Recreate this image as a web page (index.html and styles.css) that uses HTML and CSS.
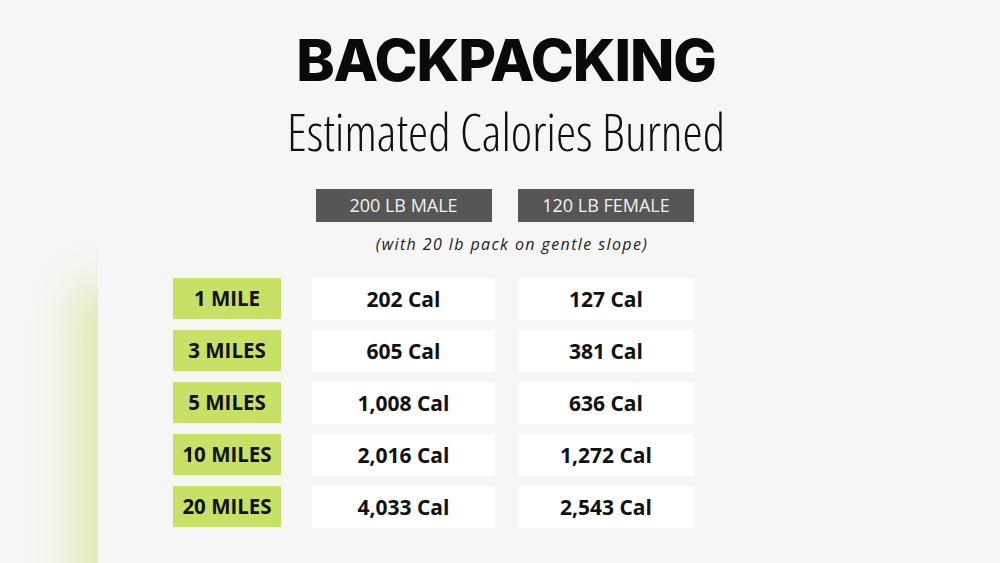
FILE: index.html
```html
<!DOCTYPE html>
<html lang="en">
<head>
<meta charset="utf-8">
<title>Backpacking - Estimated Calories Burned</title>
<link rel="stylesheet" href="styles.css">
</head>
<body>
<div class="glow-clip"><div class="glow"></div></div>
<main class="page">
  <header class="head">
    <h1 class="title">BACKPACKING</h1>
    <p class="subtitle">Estimated Calories Burned</p>
  </header>
  <div class="table">
    <div class="row hrow">
      <div class="label-space"></div>
      <div class="col1 hcell"><span class="hbox">200 LB MALE</span></div>
      <div class="col2 hcell"><span class="hbox">120 LB FEMALE</span></div>
    </div>
    <p class="note">(with 20 lb pack on gentle slope)</p>
    <div class="row">
      <div class="label">1 MILE</div>
      <div class="cell col1">202 Cal</div>
      <div class="cell col2">127 Cal</div>
    </div>
    <div class="row">
      <div class="label">3 MILES</div>
      <div class="cell col1">605 Cal</div>
      <div class="cell col2">381 Cal</div>
    </div>
    <div class="row">
      <div class="label">5 MILES</div>
      <div class="cell col1">1,008 Cal</div>
      <div class="cell col2">636 Cal</div>
    </div>
    <div class="row">
      <div class="label">10 MILES</div>
      <div class="cell col1">2,016 Cal</div>
      <div class="cell col2">1,272 Cal</div>
    </div>
    <div class="row">
      <div class="label">20 MILES</div>
      <div class="cell col1">4,033 Cal</div>
      <div class="cell col2">2,543 Cal</div>
    </div>
  </div>
</main>
</body>
</html>
```

FILE: styles.css
```css
html, body {
  margin: 0;
  padding: 0;
}
body {
  width: 1000px;
  height: 563px;
  background: #f6f6f6;
  overflow: hidden;
  position: relative;
  font-family: "Open Sans", "Liberation Sans", sans-serif;
  color: #111;
}
.glow-clip {
  position: absolute;
  left: 0;
  top: 0;
  width: 98px;
  height: 563px;
  overflow: hidden;
}
.glow {
  position: absolute;
  left: 74px;
  top: 285px;
  width: 64px;
  height: 380px;
  background: #c9df78;
  filter: blur(24px);
  opacity: 0.55;
}
.page {
  position: relative;
  display: flex;
  flex-direction: column;
}
.head {
  display: flex;
  flex-direction: column;
  align-items: center;
  padding-left: 12px;
  padding-top: 25px;
}
.title {
  margin: 0;
  font-family: "Inter", "Liberation Sans", sans-serif;
  font-weight: 800;
  font-size: 58px;
  line-height: 70px;
  letter-spacing: -1.1px;
  color: #0a0a0a;
}
.subtitle {
  margin: 6px 0 0;
  font-family: "Open Sans", "Liberation Sans", sans-serif;
  font-weight: 300;
  font-stretch: 75%;
  font-size: 51px;
  line-height: 60px;
  color: #111;
}
.table {
  display: flex;
  flex-direction: column;
  padding-left: 173px;
  padding-top: 28px;
}
.row {
  display: flex;
  align-items: flex-start;
  margin-bottom: 10px;
}
.label-space {
  width: 108px;
  margin-right: 31px;
}
.hcell {
  display: flex;
  justify-content: center;
}
.hbox {
  width: 176px;
  height: 33px;
  background: #565656;
  color: #f2f2f2;
  font-size: 18px;
  line-height: 33px;
  text-align: center;
}
.col1 {
  width: 183px;
  margin-right: 23px;
}
.col2 {
  width: 176px;
}
.hrow {
  margin-bottom: 0;
}
.note {
  margin: 10px 0 22px;
  width: 678px;
  padding-left: 0;
  text-align: center;
  font-style: italic;
  font-size: 16px;
  letter-spacing: 1.4px;
  line-height: 24px;
  color: #222;
}
.label {
  width: 108px;
  height: 41px;
  margin-right: 31px;
  background: #c6e166;
  font-weight: 700;
  font-size: 20.5px;
  line-height: 41px;
  text-align: center;
  color: #111;
}
.cell {
  height: 42px;
  background: #ffffff;
  font-weight: 700;
  font-size: 21px;
  line-height: 42px;
  text-align: center;
  color: #111;
}
```
